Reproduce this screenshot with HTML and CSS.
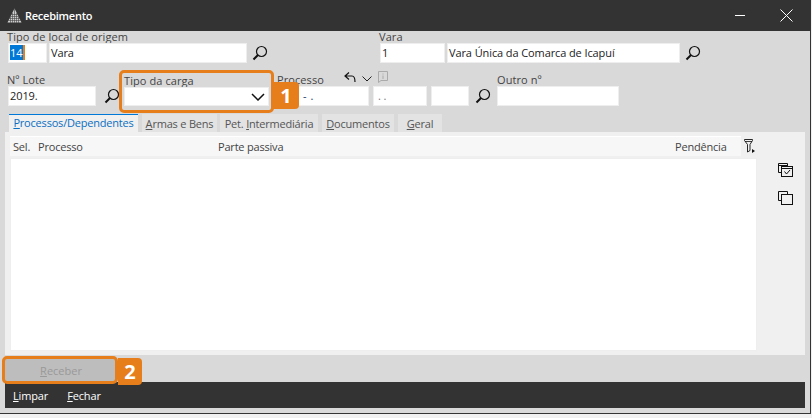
FILE: index.html
```html
<!DOCTYPE html>
<html lang="pt-BR">
<head>
<meta charset="utf-8">
<title>Recebimento</title>
<link rel="stylesheet" href="styles.css">
</head>
<body>
<svg class="defs" width="0" height="0" aria-hidden="true">
  <symbol id="lupa" viewBox="0 0 16 16">
    <circle cx="9.500" cy="6.500" r="5" fill="none" stroke="#111" stroke-width="1.200"/>
    <path d="M6 10 L1.500 14.500" stroke="#111" stroke-width="2"/>
  </symbol>
</svg>
<div class="window">
  <header class="titlebar">
    <svg class="logo" width="15" height="15" viewBox="0 0 15 15">
      <path d="M7.500 .5 L14.500 14.500 H.5 Z" fill="#d0d0d0"/>
      <path d="M5.500 5V15M7.500 1V15M9.500 5V15M3.500 9V15M11.500 9V15M1 12.500H14M2 10.500H13M3 8.500H12M4 6.500H11" stroke="#444" stroke-width=".6"/>
    </svg>
    <span class="title">Recebimento</span>
    <svg class="win-btn" width="10" height="1" viewBox="0 0 10 1"><path d="M0 .5H10" stroke="#fff"/></svg>
    <svg class="win-btn close" width="13" height="13" viewBox="0 0 13 13"><path d="M.5 .5L12.500 12.500M12.500 .5L.5 12.500" stroke="#fff"/></svg>
  </header>

  <main class="content">
    <div class="row row-one">
      <div class="field">
        <label>Tipo de local de origem</label>
        <div class="inputs">
          <div class="input w39"><span class="selected">14</span></div>
          <div class="input w198">Vara</div>
          <svg class="lupa" width="16" height="16"><use href="#lupa"/></svg>
        </div>
      </div>
      <div class="field field-vara">
        <label>Vara</label>
        <div class="inputs">
          <div class="input w65">1</div>
          <div class="input w233">Vara Única da Comarca de Icapuí</div>
          <svg class="lupa" width="16" height="16"><use href="#lupa"/></svg>
        </div>
      </div>
    </div>

    <div class="row row-two">
      <div class="field">
        <label>Nº Lote</label>
        <div class="inputs">
          <div class="input w88">2019.</div>
          <svg class="lupa lupa-lote" width="16" height="16"><use href="#lupa"/></svg>
        </div>
      </div>
      <div class="field field-carga">
        <label>Tipo da carga</label>
        <div class="input combo">
          <svg width="14" height="8" viewBox="0 0 14 8"><path d="M1 1L7 7L13 1" fill="none" stroke="#111" stroke-width="1.500"/></svg>
        </div>
      </div>
      <div class="field field-proc">
        <div class="proc-head">
          <label>Processo</label>
          <svg class="undo" width="12" height="10" viewBox="0 0 12 10"><path d="M5 .5L1 4L5 7.500M1 4H8C10 4 11 6 11 10" fill="none" stroke="#111" stroke-width="1.200"/></svg>
          <svg class="chev" width="10" height="6" viewBox="0 0 10 6"><path d="M.5 .5L5 5L9.500 .5" fill="none" stroke="#222"/></svg>
          <svg class="info" width="10" height="12" viewBox="0 0 10 12"><path d="M.5 .5H9.500V9.500H3L.5 11.500Z" fill="none" stroke="#aaa"/><path d="M5 2.500V3.500M5 4.500V8" stroke="#aaa"/></svg>
        </div>
        <div class="inputs">
          <div class="input w71 proc-main">- .</div>
          <div class="input w54 proc-dots">. .</div>
          <div class="input w38"></div>
          <svg class="lupa lupa-proc" width="16" height="16"><use href="#lupa"/></svg>
        </div>
      </div>
      <div class="field field-outro">
        <label>Outro nº</label>
        <div class="input w122"></div>
      </div>
    </div>

    <nav class="tabs">
      <span class="tab active"><u>P</u>rocessos/Dependentes</span>
      <span class="tab t-armas"><u>A</u>rmas e Bens</span>
      <span class="tab t-pet">Pet. <u>I</u>ntermediária</span>
      <span class="tab t-doc"><u>D</u>ocumentos</span>
      <span class="tab t-geral"><u>G</u>eral</span>
    </nav>

    <section class="panel">
      <div class="grid-area">
        <div class="grid-top">
          <div class="grid-head">
            <span class="c-sel">Sel.</span>
            <span class="c-proc">Processo</span>
            <span class="c-parte">Parte passiva</span>
            <span class="c-pend">Pendência</span>
          </div>
          <svg class="filter" width="12" height="15" viewBox="0 0 12 15">
            <path d="M.5 .5H8.500V1.500L6 5.500V11.500L3.500 13V5.500L.5 1.500Z" fill="none" stroke="#111" stroke-width=".9"/>
            <path d="M1 2.500H8" stroke="#111" stroke-width=".8"/>
            <path d="M8 10L11 12L8 14Z" fill="#111"/>
          </svg>
        </div>
        <div class="grid-body"></div>
      </div>
      <aside class="side-tools">
        <svg width="15" height="14" viewBox="0 0 15 14">
          <path d="M3.500 9.500H.5V.5H9.500V3.500" fill="none" stroke="#111"/>
          <path d="M.5 2.500H9.500" stroke="#111"/>
          <rect x="3.500" y="3.500" width="11" height="10" fill="none" stroke="#111"/>
          <path d="M3.500 5.500H14.500" stroke="#111"/>
          <path d="M6.500 8.500L8.500 11L12 7" fill="none" stroke="#111"/>
        </svg>
        <svg width="15" height="14" viewBox="0 0 15 14">
          <path d="M3.500 9.500H.5V.5H9.500V3.500" fill="none" stroke="#111"/>
          <rect x="3.500" y="3.500" width="11" height="10" fill="none" stroke="#111"/>
        </svg>
      </aside>
    </section>

    <div class="action-row">
      <button class="btn-receber"><u>R</u>eceber</button>
    </div>

    <footer class="footer">
      <span class="foot-link"><u>L</u>impar</span>
      <span class="foot-link"><u>F</u>echar</span>
    </footer>
  </main>

  <div class="mark mark-one"></div>
  <div class="badge badge-one">1</div>
  <div class="mark mark-two"></div>
  <div class="badge badge-two">2</div>
</div>
</body>
</html>
```
FILE: styles.css
```css
* { box-sizing: border-box; }
html, body { margin: 0; padding: 0; }
body {
  width: 812px;
  height: 418px;
  overflow: hidden;
  background: #f0f0f0;
  font-family: "Open Sans", "Noto Sans", sans-serif;
  font-size: 11px;
  color: #333;
}
.defs { position: absolute; }
.window {
  position: relative;
  width: 811px;
  height: 414px;
  background: #d9d9d9;
  border-right: 1px solid #333;
  border-bottom: 1px solid #333;
  display: flex;
  flex-direction: column;
}
.titlebar {
  height: 31px;
  flex: none;
  background: #333;
  display: flex;
  align-items: center;
  padding-left: 7px;
  color: #fff;
}
.logo { margin-right: 3px; }
.title { font-weight: 600; font-size: 11px; flex: 1; letter-spacing: -.25px; }
.win-btn { margin-right: 0; }
.win-btn.close { margin-right: 17px; margin-left: 35px; }
.content { flex: 1; display: flex; flex-direction: column; min-height: 0; }
.row { display: flex; flex: none; }
.row-one { height: 43px; padding: 0 0 0 8px; }
.row-two { height: 40px; padding-left: 8px; }
.field { display: flex; flex-direction: column; }
.field label {
  height: 13px;
  line-height: 13px;
  margin: -1px 0 0 -1px;
  display: block;
  color: #444;
  white-space: nowrap;
  letter-spacing: .08px;
}
.field-vara { margin-left: 112px; }
.inputs { display: flex; gap: 2px; align-items: flex-start; }
.input {
  height: 20px;
  background: #fff;
  border: 1px solid #eee;
  line-height: 18px;
  padding-left: 1px;
  color: #222;
  white-space: nowrap;
  letter-spacing: -.1px;
}
.w39 { width: 39px; }
.w198 { width: 198px; }
.w65 { width: 65px; }
.w233 { width: 233px; }
.w88 { width: 88px; }
.w71 { width: 71px; }
.w54 { width: 54px; }
.w38 { width: 38px; }
.w122 { width: 122px; }
.selected { background: #0078d7; color: #fff; display: inline-block; line-height: 15px; padding-right: 1px; border-right: 2px solid #e67e1c; }
.lupa { margin: 2px 0 0 3px; }
.lupa-lote { margin-left: 6px; }
.field-carga { margin-left: 4px; width: 145px; }
.field-carga label { margin: 0; }
.combo { width: 145px; display: flex; align-items: center; justify-content: flex-end; padding-right: 3px; height: 19px; margin-top: 0; }
.field-proc { margin-left: 29px; }
.proc-head { height: 13px; display: flex; align-items: flex-start; position: relative; margin-left: -21px; margin-top: -1px; }
.proc-head label { margin: 0; width: 67px; }
.proc-head svg { margin-top: -1px; }
.chev { margin-left: 6px; margin-top: 3px !important; }
.info { margin-left: 6px; margin-top: -2px !important; }
.proc-main { color: #1a3a6a; padding-left: 4px; border-left-color: #fff; letter-spacing: .6px; }
.proc-dots { color: #777; padding-left: 4px; }
.inputs .w71 + .w54, .inputs .w54 + .w38 { margin-left: 2px; }
.lupa-proc { margin-left: 4px; }
.field-outro { margin-left: 6px; }
.field-outro label { margin: -1px 0 0; }
.tabs {
  flex: none;
  display: flex;
  height: 18px;
  padding-left: 9px;
  gap: 4px;
}
.tab {
  height: 18px;
  line-height: 19px;
  background: #e3e3e3;
  text-align: center;
  color: #555;
  white-space: nowrap;
  letter-spacing: -.2px;
}
.tab.active {
  width: 129px;
  background: #f0f0f0;
  border-top: 1px solid #0078d7;
  line-height: 16px;
  color: #0a6fc2;
}
.t-armas { width: 75px; }
.t-pet { width: 98px; margin-left: -1px; }
.t-doc { width: 72px; }
.t-geral { width: 44px; }
.panel {
  flex: none;
  height: 223px;
  margin: 0 5px;
  background: #f0f0f0;
  display: flex;
  padding: 4px 0 0 5px;
}
.grid-area { width: 747px; display: flex; flex-direction: column; }
.grid-top { display: flex; height: 22px; flex: none; }
.grid-head {
  width: 731px;
  height: 20px;
  background: #f7f7f7;
  border-top: 1px solid #fff;
  position: relative;
  display: flex;
  line-height: 20px;
  color: #444;
  letter-spacing: -.2px;
}
.c-sel { width: 28px; padding-left: 3px; }
.c-proc { width: 180px; }
.c-parte { flex: 1; }
.c-pend { width: 66px; }
.filter { margin: 3px 0 0 3px; }
.grid-body { height: 193px; background: #fff; border: 1px solid #eee; }
.side-tools {
  display: flex;
  flex-direction: column;
  gap: 14px;
  padding: 27px 0 0 21px;
}
.action-row { height: 27px; flex: none; padding: 3px 0 0 5px; }
.btn-receber {
  display: block;
  width: 112px;
  height: 24px;
  background: #bdbdbd;
  border: 0;
  padding: 0;
  font: inherit;
  color: #999;
  text-align: center;
}
.footer {
  flex: none;
  height: 26px;
  margin: 0 5px;
  background: #333;
  display: flex;
  align-items: center;
  padding-left: 8px;
  gap: 19px;
  color: #fff;
  letter-spacing: -.15px;
}
.mark {
  position: absolute;
  border: 3px solid #e67e1c;
  border-radius: 5px;
}
.mark-one { left: 119px; top: 70px; width: 155px; height: 43px; }
.mark-two { left: 2px; top: 356px; width: 116px; height: 28px; }
.badge {
  position: absolute;
  background: #e67e1c;
  color: #fff;
  font-weight: 700;
  font-size: 20px;
  text-align: center;
  border-radius: 0 4px 4px 0;
}
.badge-one { left: 273px; top: 82px; width: 26px; height: 27px; line-height: 27px; }
.badge-two { left: 118px; top: 358px; width: 24px; height: 27px; line-height: 27px; }
```
